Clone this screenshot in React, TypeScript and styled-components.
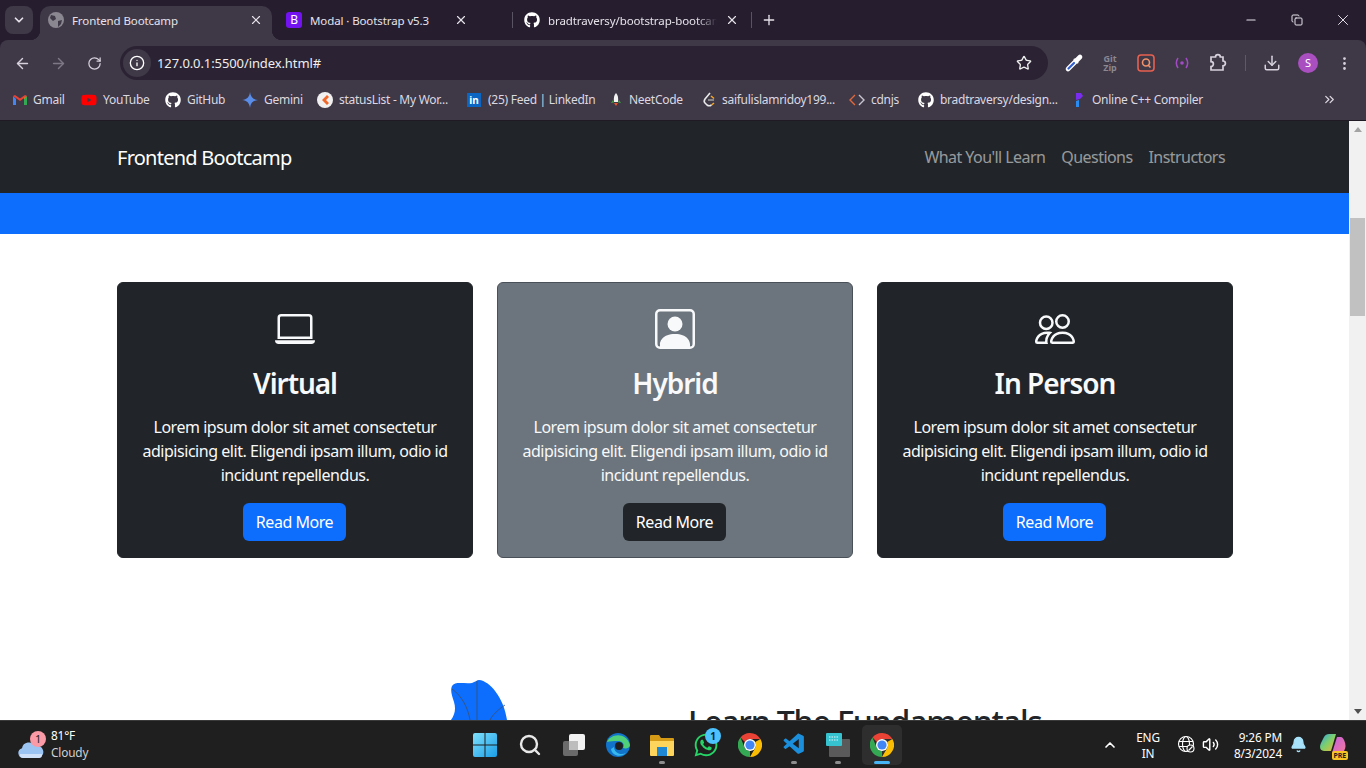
import React from 'react';
import styled, { createGlobalStyle } from 'styled-components';
import {
  ArrowLeft,
  ArrowRight,
  RotateCw,
  Info,
  Star,
  Download,
  EllipsisVertical,
  ChevronDown,
  ChevronUp,
  ChevronsRight,
  X,
  Plus,
  Minus,
  Copy,
  Volume2,
  Bell,
  Search,
} from 'lucide-react';
import { BsLaptop, BsPersonSquare, BsPeople } from 'react-icons/bs';
import { FaGithub, FaWhatsapp, FaYoutube } from 'react-icons/fa';
import { VscVscode } from 'react-icons/vsc';

const GlobalStyle = createGlobalStyle`
  html, body { margin: 0; padding: 0; height: 100%; overflow: hidden; }
  body { font-family: "Noto Sans", "Open Sans", sans-serif; }
  * { box-sizing: border-box; }
`;

const Screen = styled.div`
  width: 1366px;
  height: 768px;
  display: flex;
  flex-direction: column;
  overflow: hidden;
  background: #261e2f;
`;

/* browser chrome */
const TabStrip = styled.div`
  height: 40px;
  flex: none;
  display: flex;
  align-items: flex-end;
  padding-left: 5px;
  color: #e6e2ea;
`;
const TabSearch = styled.div`
  width: 28px;
  height: 28px;
  margin-bottom: 6px;
  margin-right: 7px;
  border-radius: 8px;
  background: #3f3847;
  display: flex;
  align-items: center;
  justify-content: center;
`;
const Tab = styled.div<{ $active?: boolean; $w: number; $pl: number; $pr: number }>`
  position: relative;
  width: ${(p) => p.$w}px;
  height: 34px;
  flex: none;
  display: flex;
  align-items: center;
  padding: 0 ${(p) => p.$pr}px 6px ${(p) => p.$pl}px;
  gap: 8px;
  font-size: 11.5px;
  letter-spacing: -0.1px;
  border-radius: 10px 10px 0 0;
  background: ${(p) => (p.$active ? '#3f3847' : 'transparent')};
  &::before,
  &::after {
    content: '';
    display: ${(p) => (p.$active ? 'block' : 'none')};
    position: absolute;
    bottom: 0;
    width: 10px;
    height: 10px;
  }
  &::before {
    left: -10px;
    background: radial-gradient(circle at 0 0, transparent 10px, #3f3847 10.5px);
  }
  &::after {
    right: -10px;
    background: radial-gradient(circle at 100% 0, transparent 10px, #3f3847 10.5px);
  }
`;
const TabTitle = styled.span<{ $fade?: boolean }>`
  flex: 1;
  white-space: nowrap;
  overflow: hidden;
  ${(p) => (p.$fade ? 'mask-image: linear-gradient(90deg, #000 88%, transparent);' : '')}
`;
const TabSeparator = styled.div`
  width: 1px;
  height: 16px;
  margin-bottom: 12px;
  background: #5a5364;
  flex: none;
`;
const NewTab = styled.div`
  width: 34px;
  height: 28px;
  margin-bottom: 6px;
  display: flex;
  align-items: center;
  justify-content: center;
`;
const WindowControls = styled.div`
  margin-left: auto;
  height: 40px;
  display: flex;
  align-items: center;
`;
const WindowButton = styled.div`
  width: 46px;
  height: 40px;
  display: flex;
  align-items: center;
  justify-content: center;
`;
const BootstrapMark = styled.span`
  width: 16px;
  height: 16px;
  flex: none;
  border-radius: 3px;
  background: #7413f1;
  color: #fff;
  font-size: 12px;
  line-height: 16px;
  text-align: center;
`;
const Toolbar = styled.div`
  height: 40px;
  flex: none;
  background: #3f3847;
  border-radius: 8px 8px 0 0;
  display: flex;
  align-items: flex-end;
  padding-left: 4px;
  color: #d6d1dc;
`;
const ToolButton = styled.div<{ $w?: number }>`
  width: ${(p) => p.$w ?? 36}px;
  height: 34px;
  flex: none;
  display: flex;
  align-items: center;
  justify-content: center;
`;
const Omnibox = styled.div`
  width: 928px;
  height: 34px;
  flex: none;
  margin: 0 8px;
  border-radius: 17px;
  background: #2b2333;
  display: flex;
  align-items: center;
  padding: 0 16px 0 3px;
  font-size: 13px;
  color: #eee;
`;
const InfoChip = styled.div`
  width: 28px;
  height: 28px;
  border-radius: 50%;
  background: #3f3847;
  display: flex;
  align-items: center;
  justify-content: center;
  margin-right: 6px;
`;
const Url = styled.span`
  flex: 1;
  letter-spacing: -0.1px;
`;
const GitZip = styled.span`
  font-size: 9px;
  line-height: 9px;
  font-weight: 700;
  color: #8b8790;
  text-align: center;
`;
const Avatar = styled.div`
  width: 20px;
  height: 20px;
  border-radius: 50%;
  background: #a94fc0;
  color: #fff;
  font-size: 11px;
  text-align: center;
  line-height: 20px;
`;
const ToolDivider = styled.div`
  width: 1px;
  height: 16px;
  background: #5f5868;
  flex: none;
  margin: 0 0 9px 9px;
`;
const Bookmarks = styled.div`
  height: 41px;
  flex: none;
  background: #3f3847;
  border-bottom: 1px solid #1f1a24;
  display: flex;
  align-items: center;
  padding: 0 0 1px 13px;
  color: #dcd8e0;
`;
const Bookmark = styled.div<{ $w: number }>`
  width: ${(p) => p.$w}px;
  flex: none;
  display: flex;
  align-items: center;
  gap: 6px;
  font-size: 12px;
  letter-spacing: -0.27px;
  white-space: nowrap;
  overflow: hidden;
`;
const LinkedinMark = styled.span`
  width: 14px;
  height: 14px;
  flex: none;
  margin-right: 1px;
  background: #0a66c2;
  color: #fff;
  font-size: 10px;
  font-weight: 700;
  line-height: 14px;
  text-align: center;
  letter-spacing: 0;
`;
const MoreBookmarks = styled.div`
  margin-left: auto;
  margin-right: 29px;
  display: flex;
`;

/* page */
const Viewport = styled.div`
  flex: 1;
  min-height: 0;
  display: flex;
`;
const Page = styled.div`
  flex: 1;
  min-width: 0;
  overflow: hidden;
  background: #fff;
  font-size: 16px;
  color: #212529;
  letter-spacing: -0.46px;
`;
const Navbar = styled.nav`
  height: 72px;
  background: #212529;
  display: flex;
  align-items: center;
  justify-content: space-between;
  padding: 0 116px 0 117px;
`;
const Brand = styled.span`
  font-size: 20px;
  color: #fff;
  letter-spacing: -0.75px;
`;
const NavLinks = styled.div`
  display: flex;
`;
const NavLink = styled.a`
  padding: 0 8px;
  color: rgba(255, 255, 255, 0.55);
  letter-spacing: -0.56px;
`;
const Hero = styled.div`
  height: 41px;
  background: #0d6efd;
`;
const Cards = styled.section`
  padding: 48px 116px 0 117px;
  display: grid;
  grid-template-columns: repeat(3, 356px);
  gap: 24px;
`;
const Card = styled.div<{ $muted?: boolean }>`
  height: 276px;
  padding: 26px 16px 0;
  border-radius: 6px;
  border: 1px solid ${(p) => (p.$muted ? '#495057' : '#212529')};
  background: ${(p) => (p.$muted ? '#6c757d' : '#212529')};
  color: #f8f9fa;
  text-align: center;
  display: flex;
  flex-direction: column;
  align-items: center;
`;
const CardIcon = styled.div`
  height: 42px;
  font-size: 40px;
  line-height: 1;
  color: #f8f9fa;
`;
const CardTitle = styled.h3`
  margin: 15px 0 0;
  font-size: 28px;
  font-weight: 600;
  line-height: 34px;
  letter-spacing: -1.05px;
`;
const CardText = styled.p`
  margin: 15px 0 0;
  line-height: 24px;
`;
const ReadMore = styled.a<{ $dark?: boolean }>`
  margin: 16px 1px 0 0;
  height: 38px;
  width: 103px;
  border-radius: 6px;
  display: flex;
  align-items: center;
  justify-content: center;
  color: #fff;
  background: ${(p) => (p.$dark ? '#212529' : '#0d6efd')};
`;
const Learn = styled.section`
  padding: 122px 0 0 450px;
  display: flex;
`;
const Leaf = styled.svg`
  width: 60px;
  height: 120px;
  flex: none;
`;
const LearnTitle = styled.h2`
  margin: 23px 0 0 178px;
  font-size: 32px;
  font-weight: 500;
  line-height: 38px;
  letter-spacing: -1.15px;
  white-space: nowrap;
`;
const Scrollbar = styled.div`
  width: 17px;
  flex: none;
  background: #f1f1f1;
  display: flex;
  flex-direction: column;
  align-items: center;
`;
const ScrollArrow = styled.div<{ $down?: boolean }>`
  width: 0;
  height: 0;
  flex: none;
  border-left: 4px solid transparent;
  border-right: 4px solid transparent;
  ${(p) => (p.$down ? 'border-top: 5px solid #505050;' : 'border-bottom: 5px solid #a3a3a3;')}
  margin: ${(p) => (p.$down ? 'auto 0 6px' : '6px 0 0')};
`;
const ScrollThumb = styled.div`
  width: 15px;
  height: 98px;
  margin-top: 86px;
  background: #c1c1c1;
`;

/* windows taskbar */
const Taskbar = styled.div`
  height: 48px;
  flex: none;
  background: #1f1f1f;
  border-top: 1px solid #3a3a3a;
  display: grid;
  grid-template-columns: 1fr 440px 1fr;
  align-items: center;
  color: #fff;
  font-size: 11.8px;
  letter-spacing: -0.15px;
`;
const Weather = styled.div`
  display: flex;
  align-items: center;
  padding-left: 18px;
  gap: 7px;
`;
const WeatherIcon = styled.div`
  position: relative;
  width: 26px;
  height: 26px;
  display: flex;
  align-items: flex-end;
`;
const PinkBadge = styled.span`
  position: absolute;
  top: -1px;
  left: 12px;
  width: 16px;
  height: 16px;
  border-radius: 50%;
  background: #f99aa6;
  color: #1f1f1f;
  font-size: 11px;
  line-height: 16px;
  text-align: center;
`;
const WeatherText = styled.div`
  display: flex;
  flex-direction: column;
  line-height: 17px;
  margin-top: -1px;
`;
const Muted = styled.span`
  color: #d0d0d0;
`;
const TaskIcons = styled.div`
  display: flex;
`;
const TaskIcon = styled.div<{ $active?: boolean; $dot?: boolean }>`
  position: relative;
  width: ${(p) => (p.$active ? 40 : 44)}px;
  height: 40px;
  flex: none;
  margin: ${(p) => (p.$active ? '0 0 0 2px' : '0')};
  border-radius: 5px;
  display: flex;
  align-items: center;
  justify-content: center;
  background: ${(p) => (p.$active ? '#2e2e2e' : 'transparent')};
  &:first-child {
    margin-right: 1px;
  }
  &::after {
    content: '';
    display: ${(p) => (p.$active || p.$dot ? 'block' : 'none')};
    position: absolute;
    bottom: 1px;
    left: 50%;
    transform: translateX(-50%);
    height: 3px;
    border-radius: 2px;
    width: ${(p) => (p.$active ? 16 : 6)}px;
    background: ${(p) => (p.$active ? '#47b4f5' : '#8e8e8e')};
  }
`;
const BlueBadge = styled.span`
  position: absolute;
  top: 3px;
  right: 7px;
  width: 16px;
  height: 16px;
  border-radius: 50%;
  background: #4cc2ff;
  color: #10202a;
  font-size: 10px;
  font-weight: 700;
  line-height: 16px;
  text-align: center;
`;
const Tray = styled.div`
  display: flex;
  align-items: center;
  justify-content: flex-end;
`;
const TrayCell = styled.div<{ $w: number }>`
  width: ${(p) => p.$w}px;
  flex: none;
  display: flex;
  flex-direction: column;
  align-items: center;
  justify-content: center;
  line-height: 16px;
`;
const Clock = styled.div`
  width: 60px;
  flex: none;
  margin-right: 4px;
  text-align: right;
  line-height: 16px;
  white-space: nowrap;
`;
const CopilotWrap = styled.div`
  position: relative;
  width: 26px;
  height: 26px;
  margin: 0 20px 0 10px;
`;
const PreTag = styled.span`
  position: absolute;
  right: -2px;
  bottom: -2px;
  padding: 0 2px;
  border-radius: 2px;
  background: #f7c325;
  color: #1f1f1f;
  font-size: 7px;
  line-height: 9px;
  font-weight: 700;
`;

function GmailIcon() {
  return (
    <svg width="14" height="14" viewBox="0 0 14 14">
      <path d="M0 3v9h3V6z" fill="#4285f4" />
      <path d="M14 3v9h-3V6z" fill="#34a853" />
      <path d="M0 3l7 5 7-5-2-1-5 3.500L2 2z" fill="#ea4335" />
      <path d="M11 6l3-3v0l-3 2z" fill="#fbbc04" />
    </svg>
  );
}

function GeminiIcon() {
  return (
    <svg width="16" height="16" viewBox="0 0 16 16">
      <path d="M8 0C8.500 5 11 7.500 16 8 11 8.500 8.500 11 8 16 7.500 11 5 8.500 0 8 5 7.500 7.500 5 8 0z" fill="#5a8de8" />
    </svg>
  );
}

function StatusListIcon() {
  return (
    <svg width="16" height="16" viewBox="0 0 16 16">
      <circle cx="8" cy="8" r="8" fill="#f0f0f0" />
      <path d="M10 3L5 8l5 5 2-2-3-3 3-3z" fill="#f0672a" />
    </svg>
  );
}

function NeetCodeIcon() {
  return (
    <svg width="14" height="16" viewBox="0 0 14 16">
      <path d="M7 1c2 2 2.500 5 2 9H5C4.500 6 5 3 7 1z" fill="#f3f3f3" />
      <path d="M5 11h4l-2 3z" fill="#e8552d" />
      <path d="M4 8l-2 3 3-.5zM10 8l2 3-3-.5z" fill="#3ea33e" />
    </svg>
  );
}

function LeetIcon() {
  return (
    <svg width="14" height="16" viewBox="0 0 14 16" fill="none">
      <path d="M8 1L3 7c-1 1.500-1 3 0 4l2 2c1.500 1 3 1 4.500 0" stroke="#e8e8e8" strokeWidth="1.600" />
      <path d="M6 8h6" stroke="#9a9a9a" strokeWidth="1.600" />
      <path d="M9 4l3 2.500M9.500 13l2.500-2" stroke="#f5a623" strokeWidth="1.600" />
    </svg>
  );
}

function CodeBrackets() {
  return (
    <svg width="16" height="16" viewBox="0 0 16 16" fill="none" strokeWidth="1.400">
      <path d="M6 3L1 8l5 5" stroke="#e0693a" />
      <path d="M10 3l5 5-5 5" stroke="#c9c5d0" />
    </svg>
  );
}

function CompilerIcon() {
  return (
    <svg width="14" height="16" viewBox="0 0 14 16">
      <path d="M4 1h5l2 3-3 3-4 1z" fill="#7a2cf0" />
      <path d="M4 9l3-1v7H4z" fill="#2a8cf0" />
    </svg>
  );
}

function TabGlobe() {
  return (
    <svg width="16" height="16" viewBox="0 0 16 16">
      <circle cx="8" cy="8" r="8" fill="#8b8791" />
      <path d="M3 3l4 1 1 3-3 2-3-3zM10 9l4-1-1 4-3 3z" fill="#3f3847" />
    </svg>
  );
}

function EyedropperIcon() {
  return (
    <svg width="20" height="20" viewBox="0 0 20 20" fill="none" strokeLinecap="round">
      <path d="M4 16L12 8" stroke="#fff" strokeWidth="4.600" />
      <path d="M4.500 15.500L10 10" stroke="#2f5fd0" strokeWidth="2.200" />
      <path d="M10.500 6.500l3 3" stroke="#fff" strokeWidth="2" />
      <path d="M13 7l3-3" stroke="#fff" strokeWidth="4.600" />
    </svg>
  );
}

function QueryIcon() {
  return (
    <svg width="18" height="20" viewBox="0 0 18 20" fill="none" strokeWidth="1.600">
      <rect x="1" y="2" width="16" height="16" rx="3" stroke="#e8604f" />
      <circle cx="9" cy="9.500" r="3.500" stroke="#f0916a" />
      <path d="M11 12l2.500 2.500" stroke="#f0916a" />
    </svg>
  );
}

function BroadcastIcon() {
  return (
    <svg width="18" height="14" viewBox="0 0 18 14" fill="none" stroke="#a24bc4" strokeWidth="1.500">
      <circle cx="9" cy="7" r="1.800" fill="#a24bc4" stroke="none" />
      <path d="M5 2C3 5 3 9 5 12M13 2c2 3 2 7 0 10" />
    </svg>
  );
}

function ExtensionIcon() {
  return (
    <svg width="20" height="20" viewBox="0 0 20 20" fill="none" stroke="#d6d1dc" strokeWidth="1.700">
      <path d="M3 4h4.500a2.400 2.400 0 0 1 4.800 0H15v4a2.400 2.400 0 0 1 0 4.800V17H3v-3.500a2.400 2.400 0 0 0 0-4.800z" />
    </svg>
  );
}

function TrayGlobe() {
  return (
    <svg width="19" height="19" viewBox="0 0 19 19" fill="none" stroke="#fff" strokeWidth="1.100">
      <circle cx="9" cy="9" r="7.500" />
      <ellipse cx="9" cy="9" rx="3.500" ry="7.500" />
      <path d="M2 6.500h14M2 11.500h14" />
      <circle cx="13.500" cy="13.500" r="3.500" fill="#1f1f1f" />
      <path d="M11.500 15.500l4-4" />
    </svg>
  );
}

function ChromeLogo() {
  return (
    <svg width="24" height="24" viewBox="0 0 24 24">
      <path d="M12 0a12 12 0 0 1 10.400 6H12a6 6 0 0 0-5.200 3L2.500 4.500A12 12 0 0 1 12 0z" fill="#ea4335" />
      <path d="M22.400 6A12 12 0 0 1 12 24l5.200-9a6 6 0 0 0 0-6z" fill="#fbbc04" />
      <path d="M2.500 4.500L6.800 15a6 6 0 0 0 5.200 3l0 0L12 24A12 12 0 0 1 2.500 4.500z" fill="#34a853" />
      <circle cx="12" cy="12" r="6" fill="#fff" />
      <circle cx="12" cy="12" r="4.600" fill="#4285f4" />
    </svg>
  );
}

function WindowsLogo() {
  return (
    <svg width="24" height="24" viewBox="0 0 24 24">
      <defs>
        <linearGradient id="win" x1="0" y1="0" x2="1" y2="1">
          <stop offset="0" stopColor="#7fe0fb" />
          <stop offset="1" stopColor="#1a9ee8" />
        </linearGradient>
      </defs>
      <path d="M0 2a2 2 0 0 1 2-2h9.500v11.500H0zM12.500 0H22a2 2 0 0 1 2 2v9.500H12.500zM0 12.500h11.500V24H2a2 2 0 0 1-2-2zM12.500 12.500H24V22a2 2 0 0 1-2 2h-9.500z" fill="url(#win)" />
    </svg>
  );
}

function TaskViewIcon() {
  return (
    <svg width="24" height="24" viewBox="0 0 24 24">
      <rect x="7" y="1" width="16" height="16" rx="2" fill="#f2f2f2" />
      <rect x="1" y="8" width="15" height="15" rx="2" fill="#6b6b6b" />
      <rect x="7" y="8" width="9" height="9" fill="#bdbdbd" />
    </svg>
  );
}

function EdgeLogo() {
  return (
    <svg width="24" height="24" viewBox="0 0 24 24">
      <circle cx="12" cy="12" r="12" fill="#1173c9" />
      <path d="M1 9C4 1 20-2 24 12c0 3-4 4-7 3 2-3 0-7-5-7-4 0-8 0-11 1z" fill="#4fcf7a" />
      <path d="M8 14c0 5 6 9 12 6-5 5-14 3-15-4z" fill="#37b9ee" />
      <circle cx="13" cy="13" r="4" fill="#1f1f1f" />
    </svg>
  );
}

function FolderIcon() {
  return (
    <svg width="24" height="24" viewBox="0 0 24 24">
      <path d="M0 3a1 1 0 0 1 1-1h8l2 3h12a1 1 0 0 1 1 1v3H0z" fill="#d59a16" />
      <path d="M0 8h24v14a1 1 0 0 1-1 1H1a1 1 0 0 1-1-1z" fill="#fdd55c" />
      <rect x="7" y="14" width="10" height="9" fill="#1e88d4" />
    </svg>
  );
}

function KeyboardApp() {
  return (
    <svg width="24" height="24" viewBox="0 0 24 24">
      <rect x="3" y="6" width="21" height="18" rx="1" fill="#5a5a5a" />
      <rect x="0" y="0" width="16" height="13" rx="1" fill="#37c2d0" />
      <path d="M3 4h10M3 7h10" stroke="#e0f8fa" strokeWidth="1.200" strokeDasharray="1.500 1" />
    </svg>
  );
}

function CopilotIcon() {
  return (
    <svg width="26" height="26" viewBox="0 0 26 26">
      <defs>
        <linearGradient id="cop" x1="0" y1="0" x2="1" y2="1">
          <stop offset="0" stopColor="#2ea6e8" />
          <stop offset="0.5" stopColor="#7fcf6a" />
          <stop offset="1" stopColor="#f2b632" />
        </linearGradient>
        <linearGradient id="cop2" x1="0" y1="0" x2="1" y2="1">
          <stop offset="0" stopColor="#c55fe0" />
          <stop offset="1" stopColor="#f27a9b" />
        </linearGradient>
      </defs>
      <path d="M9 2h7l-5 17H4C0 19-1 15 1 11l3-6c1-2 3-3 5-3z" fill="url(#cop)" />
      <path d="M17 5h4c1 0 2 1 3 3 2 4 2 8 0 11-1 1-2 2-4 2h-8z" fill="url(#cop2)" />
    </svg>
  );
}

function CloudIcon() {
  return (
    <svg width="26" height="18" viewBox="0 0 26 18">
      <path d="M5 18a5 5 0 0 1-1-9.800A7 7 0 0 1 17 6a5.500 5.500 0 0 1 4 12z" fill="#9cc4f2" />
      <path d="M2 14h22v1a3 3 0 0 1-3 3H5a3 3 0 0 1-3-3z" fill="#cfe2fa" />
    </svg>
  );
}

const bookmarks = [
  { w: 68, icon: <GmailIcon />, label: 'Gmail' },
  { w: 84, icon: <FaYoutube size={16} color="#f00" />, label: 'YouTube' },
  { w: 77, icon: <FaGithub size={16} color="#fff" />, label: 'GitHub' },
  { w: 75, icon: <GeminiIcon />, label: 'Gemini' },
  { w: 150, icon: <StatusListIcon />, label: 'statusList - My Wor...' },
  { w: 142, icon: <LinkedinMark>in</LinkedinMark>, label: '(25) Feed | LinkedIn' },
  { w: 93, icon: <NeetCodeIcon />, label: 'NeetCode' },
  { w: 147, icon: <LeetIcon />, label: 'saifulislamridoy199...' },
  { w: 69, icon: <CodeBrackets />, label: 'cdnjs' },
  { w: 154, icon: <FaGithub size={16} color="#fff" />, label: 'bradtraversy/design...' },
  { w: 150, icon: <CompilerIcon />, label: 'Online C++ Compiler' },
];

const cards = [
  { title: 'Virtual', icon: <BsLaptop /> },
  { title: 'Hybrid', icon: <BsPersonSquare />, muted: true },
  { title: 'In Person', icon: <BsPeople /> },
];

export default function App() {
  return (
    <Screen>
      <GlobalStyle />
      <TabStrip>
        <TabSearch>
          <ChevronDown size={14} strokeWidth={3} />
        </TabSearch>
        <Tab $active $w={232} $pl={8} $pr={9}>
          <TabGlobe />
          <TabTitle>Frontend Bootcamp</TabTitle>
          <X size={14} />
        </Tab>
        <Tab $w={240} $pl={14} $pr={44}>
          <BootstrapMark>B</BootstrapMark>
          <TabTitle>Modal · Bootstrap v5.3</TabTitle>
          <X size={14} />
        </Tab>
        <TabSeparator />
        <Tab $w={238} $pl={11} $pr={12}>
          <FaGithub size={16} color="#fff" />
          <TabTitle $fade>bradtraversy/bootstrap-bootcamp</TabTitle>
          <X size={14} />
        </Tab>
        <TabSeparator />
        <NewTab>
          <Plus size={16} />
        </NewTab>
        <WindowControls>
          <WindowButton>
            <Minus size={14} />
          </WindowButton>
          <WindowButton>
            <Copy size={12} />
          </WindowButton>
          <WindowButton>
            <X size={18} strokeWidth={1.3} />
          </WindowButton>
        </WindowControls>
      </TabStrip>
      <Toolbar>
        <ToolButton>
          <ArrowLeft size={17} />
        </ToolButton>
        <ToolButton>
          <ArrowRight size={17} color="#7d7786" />
        </ToolButton>
        <ToolButton>
          <RotateCw size={15} />
        </ToolButton>
        <Omnibox>
          <InfoChip>
            <Info size={16} color="#fff" />
          </InfoChip>
          <Url>127.0.0.1:5500/index.html#</Url>
          <Star size={16} color="#eee" />
        </Omnibox>
        <ToolButton>
          <EyedropperIcon />
        </ToolButton>
        <ToolButton>
          <GitZip>
            Git
            <br />
            Zip
          </GitZip>
        </ToolButton>
        <ToolButton>
          <QueryIcon />
        </ToolButton>
        <ToolButton>
          <BroadcastIcon />
        </ToolButton>
        <ToolButton>
          <ExtensionIcon />
        </ToolButton>
        <ToolDivider />
        <ToolButton $w={52}>
          <Download size={18} />
        </ToolButton>
        <ToolButton $w={20}>
          <Avatar>S</Avatar>
        </ToolButton>
        <ToolButton $w={52}>
          <EllipsisVertical size={17} />
        </ToolButton>
      </Toolbar>
      <Bookmarks>
        {bookmarks.map((b) => (
          <Bookmark key={b.label} $w={b.w}>
            {b.icon}
            {b.label}
          </Bookmark>
        ))}
        <MoreBookmarks>
          <ChevronsRight size={15} />
        </MoreBookmarks>
      </Bookmarks>
      <Viewport>
        <Page>
          <Navbar>
            <Brand>Frontend Bootcamp</Brand>
            <NavLinks>
              <NavLink>What You'll Learn</NavLink>
              <NavLink>Questions</NavLink>
              <NavLink>Instructors</NavLink>
            </NavLinks>
          </Navbar>
          <Hero />
          <Cards>
            {cards.map((c) => (
              <Card key={c.title} $muted={c.muted}>
                <CardIcon>{c.icon}</CardIcon>
                <CardTitle>{c.title}</CardTitle>
                <CardText>
                  Lorem ipsum dolor sit amet consectetur adipisicing elit. Eligendi ipsam illum, odio id incidunt
                  repellendus.
                </CardText>
                <ReadMore $dark={c.muted}>Read More</ReadMore>
              </Card>
            ))}
          </Cards>
          <Learn>
            <Leaf viewBox="0 0 60 120">
              <path d="M1 40C5 34 6 29 4 22 2 16 0 10 2 6 5 1 14 4 22 3 25 2 27 0 29 0 40 1 54 18 57 40V120H1z" fill="#0d6efd" />
              <path d="M27 1V40M2 9C12 16 18 28 20 40M55 25C49 29 43 34 40 40" stroke="#3d4f66" strokeWidth="0.800" fill="none" />
            </Leaf>
            <LearnTitle>Learn The Fundamentals</LearnTitle>
          </Learn>
        </Page>
        <Scrollbar>
          <ScrollArrow />
          <ScrollThumb />
          <ScrollArrow $down />
        </Scrollbar>
      </Viewport>
      <Taskbar>
        <Weather>
          <WeatherIcon>
            <CloudIcon />
            <PinkBadge>1</PinkBadge>
          </WeatherIcon>
          <WeatherText>
            <span>81°F</span>
            <Muted>Cloudy</Muted>
          </WeatherText>
        </Weather>
        <TaskIcons>
          <TaskIcon>
            <WindowsLogo />
          </TaskIcon>
          <TaskIcon>
            <Search size={24} strokeWidth={2.4} color="#e8e8e8" />
          </TaskIcon>
          <TaskIcon>
            <TaskViewIcon />
          </TaskIcon>
          <TaskIcon>
            <EdgeLogo />
          </TaskIcon>
          <TaskIcon $dot>
            <FolderIcon />
          </TaskIcon>
          <TaskIcon>
            <FaWhatsapp size={26} color="#25d366" />
            <BlueBadge>1</BlueBadge>
          </TaskIcon>
          <TaskIcon>
            <ChromeLogo />
          </TaskIcon>
          <TaskIcon $dot>
            <VscVscode size={25} color="#1b8fdc" />
          </TaskIcon>
          <TaskIcon $dot>
            <KeyboardApp />
          </TaskIcon>
          <TaskIcon $active>
            <ChromeLogo />
          </TaskIcon>
        </TaskIcons>
        <Tray>
          <TrayCell $w={24}>
            <ChevronUp size={16} strokeWidth={2.5} />
          </TrayCell>
          <TrayCell $w={52}>
            <span>ENG</span>
            <span>IN</span>
          </TrayCell>
          <TrayCell $w={24}>
            <TrayGlobe />
          </TrayCell>
          <TrayCell $w={24}>
            <Volume2 size={17} />
          </TrayCell>
          <Clock>
            9:26 PM
            <br />
            8/3/2024
          </Clock>
          <TrayCell $w={24}>
            <Bell size={17} fill="#a8e3fb" color="#a8e3fb" />
          </TrayCell>
          <CopilotWrap>
            <CopilotIcon />
            <PreTag>PRE</PreTag>
          </CopilotWrap>
        </Tray>
      </Taskbar>
    </Screen>
  );
}
